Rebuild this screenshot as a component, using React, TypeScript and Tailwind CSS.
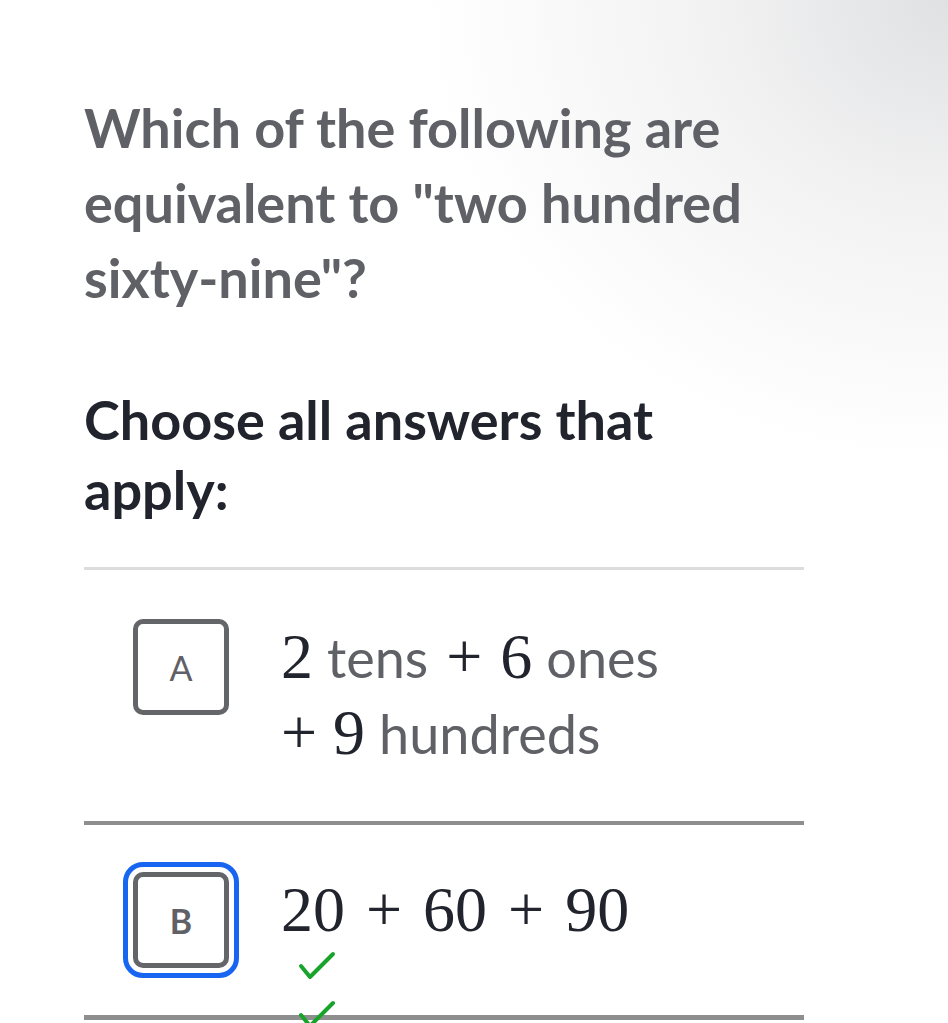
import { ReactNode } from "react";

function Check() {
	return (
		<svg width="38" height="30" viewBox="0 0 38 30" fill="none">
			<path d="M3 15 L12 26 L35 3" stroke="#18a32a" strokeWidth="4" strokeLinecap="round" strokeLinejoin="round" />
		</svg>
	)
}

function Num({ children }: { children: ReactNode }) {
	return <span className="font-['Liberation_Serif',serif] text-[#21242c] text-[64px]">{children}</span>
}

// binary plus between terms; "lead" is the one that starts a wrapped line, "wide" has a bit more room
function Plus({ lead, wide }: { lead?: boolean, wide?: boolean }) {
	const space = lead ? "mr-[16px]" : wide ? "mx-[21px]" : "mx-[18px]"
	return (
		<span className={"font-['Liberation_Serif',serif] text-[#21242c] text-[64px] " + space}>
			+
		</span>
	)
}

function Word({ children }: { children: ReactNode }) {
	return <span className="text-[#5f6166] ml-[14px]">{children}</span>
}

function LetterBox({ letter, focused }: { letter: string, focused?: boolean }) {
	return (
		<div
			className={
				focused
					? "shrink-0 w-[96px] h-[96px] rounded-[10px] border-[5px] border-[#636569] flex items-center justify-center text-[34px] font-bold text-[#5f6166] outline-[5px] outline-solid outline-[#1865f2] outline-offset-[5px]"
					: "shrink-0 w-[96px] h-[96px] rounded-[10px] border-[5px] border-[#636569] flex items-center justify-center text-[34px] text-[#5f6166]"
			}
		>
			{letter}
		</div>
	)
}

export default function App() {
	return (
		<div className="h-[1023px] overflow-hidden bg-white bg-[radial-gradient(ellipse_55%_45%_at_100%_0%,#e0e1e2_0%,#f2f2f3_45%,#ffffff_100%)] font-['Lato',sans-serif]">
			<div className="ml-[84px] w-[720px] pt-[90px]">
				<p className="text-[54px] leading-[75px] font-bold text-[#5f6166]">
					Which of the following are equivalent to "two hundred sixty-nine"?
				</p>
				<p className="mt-[70px] text-[54px] leading-[70px] font-bold text-[#21242c] pr-[60px]">
					Choose all answers that apply:
				</p>

				<div className="mt-[42px] border-t-[3px] border-[#dcdcdc]" />
				<div className="flex items-start gap-[52px] pl-[49px] pt-[49px] pb-[50px]">
					<LetterBox letter="A" />
					<div className="text-[54px] leading-[75px] whitespace-nowrap">
						<div>
							<Num>2</Num>
							<Word>tens</Word>
							<Plus />
							<Num>6</Num>
							<Word>ones</Word>
						</div>
						<div>
							<Plus lead />
							<Num>9</Num>
							<Word>hundreds</Word>
						</div>
					</div>
				</div>

				<div className="border-t-[4px] border-[#8e8e8e]" />
				<div className="flex items-start gap-[52px] pl-[49px] pt-[47px] h-[190px]">
					<LetterBox letter="B" focused />
					<div className="relative z-10 text-[54px] leading-[75px] whitespace-nowrap">
						<div>
							<Num>20</Num>
							<Plus wide />
							<Num>60</Num>
							<Plus wide />
							<Num>90</Num>
						</div>
						<div className="ml-[17px] mt-[3px] flex flex-col gap-[19px]">
							<Check />
							<Check />
						</div>
					</div>
				</div>
				<div className="border-t-[5px] border-[#8e8e8e]" />
			</div>
		</div>
	)
}
